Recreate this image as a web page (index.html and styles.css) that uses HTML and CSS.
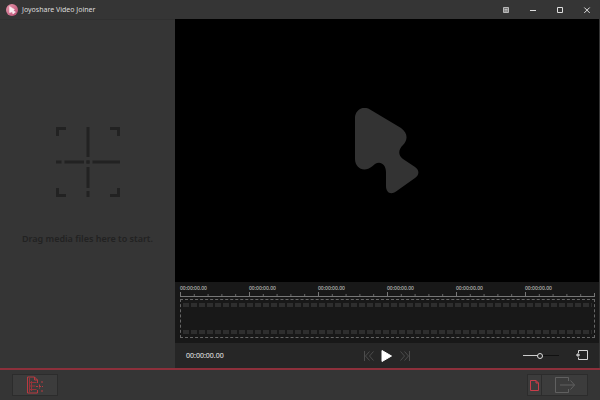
FILE: index.html
```
<!doctype html>
<html lang="en">

<head>
  <meta charset="utf-8">
  <meta name="viewport" content="width=device-width, initial-scale=1">
  <title>Joyoshare Video Joiner</title>
  <link rel="stylesheet" href="styles.css">
</head>

<body>
  <header class="titlebar">
    <svg class="logo" viewBox="0 0 12 12" aria-hidden="true">
      <defs>
        <linearGradient id="logoFill" x1="0" y1="0" x2="1" y2="1">
          <stop offset="0" stop-color="#ea9aae" />
          <stop offset="1" stop-color="#b54a70" />
        </linearGradient>
      </defs>
      <circle cx="6" cy="6" r="6" fill="url(#logoFill)" />
      <path d="M3.6 2.6 L8.3 5.4 L7.4 6.9 L9.4 8.1 L6.9 9.9 L6.4 7.7 L3.6 8.6 Z" fill="#fbeef2" stroke="#fbeef2" stroke-width=".6" stroke-linejoin="round" />
    </svg>
    <h1 class="title">Joyoshare Video Joiner</h1>
    <button class="winBtn" aria-label="Menu">
      <svg viewBox="0 0 8 8"><path d="M1.5 1.5h5v5h-5z M2.5 3.5h3 M2.5 5h3" fill="#777" stroke="#b8b8b8" /></svg>
    </button>
    <button class="winBtn" aria-label="Minimize">
      <svg viewBox="0 0 8 8"><path d="M1 4.5h6" fill="none" stroke="#ddd" /></svg>
    </button>
    <button class="winBtn" aria-label="Maximize">
      <svg viewBox="0 0 8 8"><path d="M1.5 1.5h5v5h-5z" fill="none" stroke="#ddd" /></svg>
    </button>
    <button class="winBtn" aria-label="Close">
      <svg viewBox="0 0 8 8"><path d="M1.3 1.5l5.4 5.4 M6.7 1.5l-5.4 5.4" fill="none" stroke="#e2e2e2" /></svg>
    </button>
  </header>

  <main class="workspace">
    <section class="mediaList">
      <svg class="dropIcon" viewBox="0 0 64 70" aria-hidden="true">
        <path d="M1.5 9V1.5H10 M54 1.5h8.500V9 M1.500 61v7.500H10 M54 68.500h8.500V61" />
        <path d="M32 0v30 M32 33.500v3 M32 40v21 M32 64v6" />
        <path d="M0 35h5.500 M8.500 35h19.500 M30.500 35h3 M36.500 35h27.500" />
      </svg>
      <p class="dropText">Drag media files here to start.</p>
    </section>

    <section class="player">
      <div class="screen">
        <svg class="screenLogo" viewBox="0 0 64 86" aria-hidden="true">
          <path d="M0 10 C0 2 8 -3 15 1.500 L46 20 C53 25 53 32 48 37 C43 42 43 47 48 51 L60 59 C64.500 62 64.500 67 60 70 L41 83.500 C36 87 31 85 31 78 V64 C31 56 25 52.500 20 56 L17 58.500 C9 65 0 60 0 51 Z" />
        </svg>
      </div>

      <div class="timeline">
        <div class="ruler">
          <span class="mark">00:00:00.00</span>
          <span class="mark">00:00:00.00</span>
          <span class="mark">00:00:00.00</span>
          <span class="mark">00:00:00.00</span>
          <span class="mark">00:00:00.00</span>
          <span class="mark">00:00:00.00</span>
        </div>
        <div class="track">
          <div class="perforation"></div>
          <div class="perforation"></div>
        </div>
      </div>

      <div class="controls">
        <span class="time">00:00:00.00</span>
        <div class="transport">
          <button class="ctrlBtn" aria-label="Previous frame">
            <svg width="10" height="10" viewBox="0 0 10 10"><path d="M.5 0v10 M5.500 .5L1.500 5l4 4.500 M9.500 .5L5.500 5l4 4.500" fill="none" stroke="#4c4c4c" /></svg>
          </button>
          <button class="ctrlBtn" aria-label="Play">
            <svg width="14" height="16" viewBox="0 0 14 16"><path d="M2 2.500L11.500 8L2 13.500z" fill="#fff" stroke="#fff" stroke-linejoin="round" /></svg>
          </button>
          <button class="ctrlBtn" aria-label="Next frame">
            <svg width="10" height="10" viewBox="0 0 10 10"><path d="M.5 .5l4 4.500l-4 4.500 M4.500 .5l4 4.500l-4 4.500 M9.500 0v10" fill="none" stroke="#4c4c4c" /></svg>
          </button>
        </div>
        <div class="options">
          <input class="volume" type="range" min="0" max="100" value="48" aria-label="Volume">
          <button class="ctrlBtn" aria-label="Rotate">
            <svg width="12" height="11" viewBox="0 0 12 11"><path d="M2.500 3V.5h9v9H2.500V7.500" fill="none" stroke="#d8d8d8" /><path d="M0 5h4 M2 3.200v3.600" stroke="#eee" fill="none" /></svg>
          </button>
        </div>
      </div>
    </section>
  </main>

  <footer class="bottombar">
    <button class="barBtn addBtn" aria-label="Add media">
      <svg width="18" height="18" viewBox="0 0 18 18" fill="none" stroke="#b93a40">
        <path d="M11.500 7V4L8.500 1H1.500v16h10v-3" />
        <path d="M8.500 1v3h3" />
        <path d="M3.500 2v14 M5.500 5v10 M3.500 6.500h7 M3.500 10h6 M3.500 13.500h7" stroke="#96343a" />
        <path d="M10 10.500h7 M13.500 8.500v4" stroke-dasharray="2 1" />
        <path d="M15 6h2 M15 15h2" />
      </svg>
    </button>
    <div class="exportGroup">
      <button class="barBtn formatBtn" aria-label="Output format">
        <svg width="9" height="11" viewBox="0 0 9 11" fill="none" stroke="#c93d4a"><path d="M.5 .5h5.500l2.500 2.500v7.500h-8z" /><path d="M6 .5v2.500h2.500" /></svg>
      </button>
      <button class="barBtn exportBtn" aria-label="Export">
        <svg width="22" height="18" viewBox="0 0 22 18" fill="none" stroke="#606060"><path d="M14.500 5V1.500H1.500v15h13V13" /><path d="M6 9h14.500 M16.500 4.500L20.500 9l-4 4.500" /></svg>
      </button>
    </div>
  </footer>
</body>

</html>
```
FILE: styles.css
```
* {
  box-sizing: border-box;
}

body {
  display: flex;
  flex-direction: column;
  min-height: 100vh;
  margin: 0;
  background-color: #353535;
  color: #ddd;
  font-family: "Noto Sans", "Open Sans", sans-serif;
  font-size: 7px;
}

button {
  display: flex;
  align-items: center;
  justify-content: center;
  padding: 0;
  border: 0;
  background: none;
}

svg {
  display: block;
}

/* Title bar */
.titlebar {
  display: flex;
  align-items: center;
  height: 19px;
  padding: 0 0 0 6px;
}

.logo {
  width: 12px;
  height: 12px;
}

.title {
  flex: 1;
  margin: 0 0 0 4px;
  font-size: 7px;
  font-weight: normal;
}

.winBtn {
  width: 27px;
  height: 19px;
}

.winBtn svg {
  width: 8px;
  height: 8px;
}

/* Media list and player */
.workspace {
  display: flex;
  flex: 1;
}

.mediaList {
  display: flex;
  flex-direction: column;
  align-items: center;
  flex: 0 0 175px;
  padding-top: 107px;
  border-top: 1px solid #303030;
}

.dropIcon {
  width: 64px;
  height: 70px;
  fill: none;
  stroke: #222;
  stroke-width: 3px;
}

.dropText {
  margin: 36px 0 0;
  color: #222;
  font-size: 9px;
  font-weight: 600;
  line-height: 12px;
}

.player {
  display: flex;
  flex-direction: column;
  flex: 1;
  min-width: 0;
  margin-right: 1px;
}

.screen {
  display: flex;
  align-items: center;
  justify-content: center;
  flex: 1;
  background-color: #000;
}

.screenLogo {
  width: 64px;
  height: 86px;
  fill: #333;
}

/* Timeline */
.timeline {
  padding: 2px 4px 5px 5px;
  background-color: #181818;
}

.ruler {
  display: grid;
  grid-template-columns: repeat(6, 1fr);
  height: 13px;
  border-right: 1px solid #777;
  border-bottom: 1px solid #777;
  border-image: linear-gradient(transparent 9px, #777 9px) 1;
}

.mark {
  color: #ddd;
  font-size: 5px;
  line-height: 9px;
  background:
    linear-gradient(#777, #777) 0 100% / 1px 4px no-repeat,
    linear-gradient(90deg, #666 1px, transparent 1px) 0 100% / 20% 2px repeat-x;
}

.track {
  display: flex;
  flex-direction: column;
  justify-content: space-between;
  height: 39px;
  margin-top: 2px;
  padding: 3px 2px;
  border: 1px dashed #666;
}

.perforation {
  height: 4px;
  background: linear-gradient(90deg, #2e2e2e 6px, transparent 6px) 0 0 / 8px 4px repeat-x;
}

/* Playback controls */
.controls {
  display: grid;
  grid-template-columns: 1fr auto 1fr;
  align-items: center;
  height: 25px;
  padding: 0 11px;
  background-color: #262626;
}

.time {
  color: #eee;
  font-size: 7px;
}

.transport {
  display: flex;
  align-items: center;
  gap: 6px;
}

.options {
  display: flex;
  align-items: center;
  justify-content: flex-end;
  gap: 17px;
}

.volume {
  width: 36px;
  height: 8px;
  margin: 0;
  background: linear-gradient(90deg, #ccc 50%, #111 50%) center / 100% 1px no-repeat;
  -webkit-appearance: none;
  appearance: none;
}

.volume::-webkit-slider-thumb {
  width: 6px;
  height: 6px;
  border: 1px solid #ddd;
  border-radius: 50%;
  background-color: #262626;
  -webkit-appearance: none;
}

/* Bottom bar */
.bottombar {
  display: flex;
  align-items: center;
  justify-content: space-between;
  height: 32px;
  padding: 0 12px;
  border-top: 2px solid #8d303b;
}

.barBtn {
  height: 22px;
  border: 1px solid #2c2c2c;
  background-color: #3c3c3c;
}

.addBtn {
  width: 46px;
}

.exportGroup {
  display: flex;
}

.formatBtn {
  width: 15px;
}

.exportBtn {
  width: 46px;
  border-left: 0;
}
```
